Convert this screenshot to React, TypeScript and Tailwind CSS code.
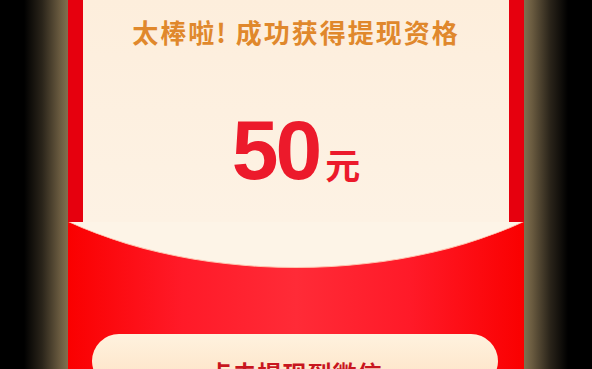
import React from 'react';

const App: React.FC = () => {
  return (
    <div className="w-[592px] h-[369px] overflow-hidden flex justify-center bg-[linear-gradient(to_right,#000_0px,#000_24px,#2a241a_42px,#6a5b40_60px,#80704f_68px,#80704f_524px,#6a5b40_532px,#2a241a_550px,#000_568px,#000_592px)] font-['Noto_Sans_CJK_SC','Liberation_Sans',sans-serif]">
      <div className="w-[456px] flex flex-col shrink-0 bg-[linear-gradient(to_right,#fa0000,#ff1a28_25%,#ff2b37_50%,#ff1a28_75%,#fa0000)]">
        {/* top cream panel */}
        <div className="h-[222px] px-[15px] bg-[#e6000e] shrink-0">
          <div className="h-full bg-[linear-gradient(to_bottom,#fdeedc,#fdf2e4)] flex flex-col items-center">
            <h1 className="mt-[15px] text-[26px] leading-[34px] font-bold tracking-[2px] text-[#e0882c]">
              太棒啦! 成功获得提现资格
            </h1>
            <div className="mt-[59px] flex items-baseline text-[#ec1a2b] font-bold">
              <span className="font-['Liberation_Sans',sans-serif] text-[84px] leading-[84px] tracking-[-3px]">50</span>
              <span className="text-[35px] leading-[40px] ml-[6px]">元</span>
            </div>
          </div>
        </div>

        {/* curved bottom of the panel */}
        <div className="relative h-[46px] overflow-hidden shrink-0">
          <div className="absolute left-1/2 -translate-x-1/2 bottom-0 w-[720px] h-[408px] rounded-[50%] bg-[#fdf4e7] border-b-[1.5px] border-[#ffc4b0]" />
        </div>

        {/* red band */}
        <div className="h-[66px] shrink-0" />

        {/* button */}
        <div className="ml-[24px] mr-[26px] h-[80px] rounded-[32px] bg-[linear-gradient(to_bottom,#fff2df,#fde2c4)] flex justify-center pt-[24px]">
          <span className="text-[24px] leading-[30px] font-bold tracking-[1px] text-[#c8161e]">点击提现到微信</span>
        </div>
      </div>
    </div>
  );
};

export default App;
